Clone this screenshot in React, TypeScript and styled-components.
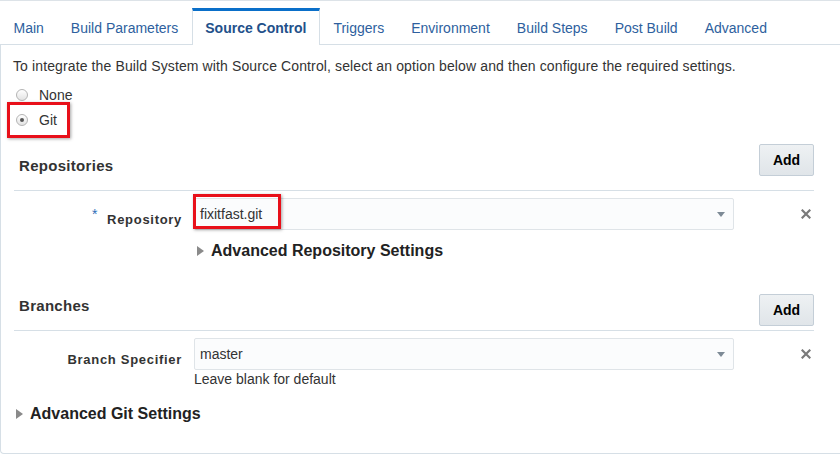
import React from "react";
import styled, { createGlobalStyle, css } from "styled-components";

const GlobalStyle = createGlobalStyle`
  html, body { margin: 0; padding: 0; background: #fff; }
  body { font-family: "Liberation Sans", Arial, sans-serif; color: #333; }
  * { box-sizing: border-box; }
`;

const Page = styled.div`
  width: 840px;
  height: 456px;
  background: #fff;
  border-top: 1px solid #dde3e8;
  overflow: hidden;
`;

const TabBar = styled.div`
  display: flex;
  align-items: flex-end;
  padding-top: 7px;
  border-bottom: 1px solid #d6dfe6;
  height: 44px;
`;

const Tab = styled.div<{ $active?: boolean }>`
  height: 36px;
  display: flex;
  align-items: center;
  padding: 0 13.5px;
  border-top: 3px solid transparent;
  font-size: 14px;
  color: #2e5f9e;
  white-space: nowrap;
  ${(p) =>
    p.$active &&
    css`
      height: 37px;
      margin-bottom: -1px;
      padding: 0 12.5px;
      border-top-color: #0a6fc9;
      border-left: 1px solid #d6dfe6;
      border-right: 1px solid #d6dfe6;
      background: #fff;
      color: #22508a;
      font-weight: bold;
    `}
`;

const Panel = styled.div`
  height: 409px;
  border-left: 1px solid #d6dfe6;
  border-bottom: 1px solid #d6dfe6;
  border-bottom-left-radius: 4px;
  padding: 12px 26px 0 12px;
`;

const Intro = styled.div`
  font-size: 14px;
  line-height: 18px;
  letter-spacing: 0.12px;
  color: #333;
  white-space: nowrap;
`;

const RadioGroup = styled.div`
  margin-top: 7px;
  display: flex;
  flex-direction: column;
  align-items: flex-start;
`;

const RadioRow = styled.label`
  height: 25px;
  display: flex;
  align-items: center;
  gap: 11px;
  padding-left: 3px;
  font-size: 14px;
  color: #333;
`;

const RadioCircle = styled.span<{ $checked?: boolean }>`
  width: 12px;
  height: 12px;
  border-radius: 50%;
  border: 1px solid #b4b4b4;
  background: linear-gradient(#ffffff, #e3e3e3);
  display: flex;
  align-items: center;
  justify-content: center;
  &::after {
    content: "";
    width: 4px;
    height: 4px;
    border-radius: 50%;
    background: ${(p) => (p.$checked ? "#555" : "transparent")};
  }
`;

/* red annotation frame drawn over its content */
const Highlight = styled.span<{ $inset: string }>`
  position: relative;
  display: inline-flex;
  align-items: center;
  &::after {
    content: "";
    position: absolute;
    inset: ${(p) => p.$inset};
    border: 3px solid #e8101a;
    box-shadow: 1px 1px 3px rgba(0, 0, 0, 0.35);
    pointer-events: none;
  }
`;

const Section = styled.div<{ $top: number }>`
  margin-top: ${(p) => p.$top}px;
`;

const SectionHeader = styled.div`
  display: flex;
  justify-content: space-between;
  align-items: flex-start;
  border-bottom: 1px solid #d6dfe6;
  margin-left: 1px;
`;

const SectionTitle = styled.h2<{ $offset: number }>`
  margin: ${(p) => p.$offset}px 0 14px 5px;
  font-size: 15px;
  line-height: 20px;
  font-weight: bold;
  color: #333;
  letter-spacing: 0.3px;
`;

const AddButton = styled.button`
  width: 55px;
  height: 32px;
  border: 1px solid #c4ced7;
  border-radius: 2px;
  background: linear-gradient(#eef1f3, #e0e5e9);
  font-family: "Liberation Sans", Arial, sans-serif;
  font-size: 14px;
  font-weight: bold;
  color: #000;
  padding: 0;
`;

const FieldRow = styled.div`
  display: grid;
  grid-template-columns: 168px 540px 1fr;
  column-gap: 12px;
  margin-top: 7px;
  margin-left: 1px;
  align-items: start;
`;

const FieldLabel = styled.div`
  height: 32px;
  display: flex;
  align-items: center;
  justify-content: flex-end;
  padding-top: 10px;
  font-size: 13px;
  font-weight: bold;
  letter-spacing: 0.7px;
  color: #333;
  white-space: nowrap;
`;

const Required = styled.span`
  color: #2e6fb8;
  font-size: 14px;
  font-weight: normal;
  margin-right: 9px;
  position: relative;
  top: -5px;
`;

const FieldBody = styled.div`
  display: flex;
  flex-direction: column;
`;

const SelectBox = styled.div`
  height: 32px;
  border: 1px solid #dfe4e8;
  border-radius: 2px;
  background: #fbfcfd;
  display: flex;
  align-items: center;
  justify-content: space-between;
  padding: 0 8px 1px 5px;
  font-size: 14px;
  color: #333;
`;

const Caret = styled.span`
  width: 0;
  height: 0;
  border-left: 4px solid transparent;
  border-right: 4px solid transparent;
  border-top: 5px solid #7d8a96;
  margin-top: 2px;
`;

const RemoveCell = styled.div`
  height: 32px;
  display: flex;
  align-items: center;
  justify-content: flex-end;
  padding-right: 3px;
`;

const Hint = styled.div`
  font-size: 14px;
  line-height: 18px;
  color: #333;
`;

const Disclosure = styled.div<{ $top: number; $left: number }>`
  display: flex;
  align-items: center;
  gap: 7px;
  height: 20px;
  margin-top: ${(p) => p.$top}px;
  margin-left: ${(p) => p.$left}px;
  font-size: 16px;
  font-weight: bold;
  color: #222;
  white-space: nowrap;
`;

const RightTriangle = styled.span`
  width: 0;
  height: 0;
  border-top: 5.5px solid transparent;
  border-bottom: 5.5px solid transparent;
  border-left: 7px solid #8a8a8a;
`;

const CloseIcon = () => (
  <svg width="10" height="10" viewBox="0 0 10 10">
    <path d="M1.5 1.5 L8.5 8.5 M8.5 1.5 L1.5 8.5" stroke="#7a7a7a" strokeWidth="2.2" strokeLinecap="square" />
  </svg>
);

const tabs = [
  "Main",
  "Build Parameters",
  "Source Control",
  "Triggers",
  "Environment",
  "Build Steps",
  "Post Build",
  "Advanced",
];

export default function App() {
  return (
    <>
      <GlobalStyle />
      <Page>
        <TabBar>
          {tabs.map((t) => (
            <Tab key={t} $active={t === "Source Control"}>
              {t}
            </Tab>
          ))}
        </TabBar>
        <Panel>
          <Intro>
            To integrate the Build System with Source Control, select an option below and then configure the required
            settings.
          </Intro>
          <RadioGroup>
            <RadioRow>
              <RadioCircle />
              None
            </RadioRow>
            <Highlight $inset="-5px -13px -6px -6px">
              <RadioRow>
                <RadioCircle $checked />
                Git
              </RadioRow>
            </Highlight>
          </RadioGroup>

          <Section $top={12}>
            <SectionHeader>
              <SectionTitle $offset={12}>Repositories</SectionTitle>
              <AddButton>Add</AddButton>
            </SectionHeader>
            <FieldRow>
              <FieldLabel>
                <Required>*</Required>Repository
              </FieldLabel>
              <FieldBody>
                <SelectBox>
                  <Highlight $inset="-12px -19px -7px -7px">fixitfast.git</Highlight>
                  <Caret />
                </SelectBox>
                <Disclosure $top={11} $left={3}>
                  <RightTriangle />
                  Advanced Repository Settings
                </Disclosure>
              </FieldBody>
              <RemoveCell>
                <CloseIcon />
              </RemoveCell>
            </FieldRow>
          </Section>

          <Section $top={33}>
            <SectionHeader>
              <SectionTitle $offset={2}>Branches</SectionTitle>
              <AddButton>Add</AddButton>
            </SectionHeader>
            <FieldRow>
              <FieldLabel>Branch Specifier</FieldLabel>
              <FieldBody>
                <SelectBox>
                  master
                  <Caret />
                </SelectBox>
                <Hint>Leave blank for default</Hint>
              </FieldBody>
              <RemoveCell>
                <CloseIcon />
              </RemoveCell>
            </FieldRow>
          </Section>

          <Disclosure $top={16} $left={3}>
            <RightTriangle />
            Advanced Git Settings
          </Disclosure>
        </Panel>
      </Page>
    </>
  );
}
